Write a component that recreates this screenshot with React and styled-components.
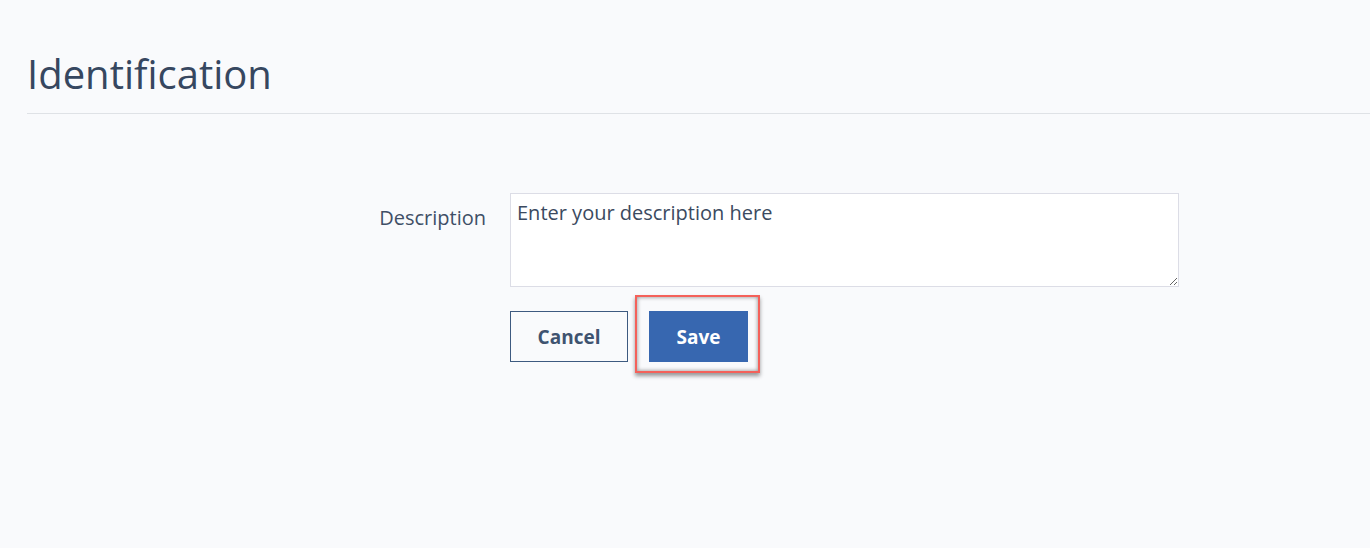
import React from "react";
import styled, { createGlobalStyle } from "styled-components";

const Global = createGlobalStyle`
  html, body { margin: 0; padding: 0; background: #f9fafc; }
  body { font-family: "Open Sans", "Noto Sans", sans-serif; color: #3b4a60; }
`;

const Page = styled.div`
  width: 1370px;
  height: 548px;
  background: #f9fafc;
  overflow: hidden;
`;

const Header = styled.header`
  margin-left: 27px;
  padding-top: 48px;
  padding-bottom: 13px;
  border-bottom: 1px solid #dfe2e6;
`;

const Title = styled.h1`
  margin: 0;
  font-size: 40px;
  line-height: 52px;
  font-weight: 400;
  color: #364760;
`;

const Form = styled.div`
  display: grid;
  grid-template-columns: 200px 669px;
  column-gap: 24px;
  row-gap: 24px;
  padding-left: 286px;
  padding-top: 79px;
`;

const Label = styled.label`
  text-align: right;
  font-size: 20px;
  line-height: 26px;
  padding-top: 12px;
  color: #3f4f66;
`;

const TextArea = styled.textarea`
  box-sizing: border-box;
  width: 669px;
  height: 94px;
  border: 1px solid #dcdde6;
  background: #fff;
  padding: 6px 6px;
  font-family: "Open Sans", "Noto Sans", sans-serif;
  font-size: 20px;
  line-height: 26px;
  color: #3b4a60;
  resize: vertical;
  outline: none;
  &::placeholder { color: #3b4a60; opacity: 1; }
`;

const Actions = styled.div`
  grid-column: 2;
  display: flex;
  gap: 21px;
`;

const Button = styled.button`
  box-sizing: border-box;
  height: 51px;
  padding: 0;
  width: ${(p) => (p.$primary ? "99px" : "118px")};
  font-family: "Open Sans", "Noto Sans", sans-serif;
  font-size: 19px;
  font-weight: 700;
  border: 1px solid ${(p) => (p.$primary ? "#3767b0" : "#3d5a80")};
  background: ${(p) => (p.$primary ? "#3767b0" : "transparent")};
  color: ${(p) => (p.$primary ? "#ffffff" : "#3f5370")};
  cursor: pointer;
`;

const Highlighted = styled.div`
  position: relative;
  display: flex;
`;

const HighlightBox = styled.span`
  position: absolute;
  left: -14px;
  top: -16px;
  right: -12px;
  bottom: -11px;
  border: 2px solid #f4615a;
  box-shadow: 0 3px 4px rgba(0, 0, 0, 0.4), inset 0 0 4px rgba(0, 0, 0, 0.45);
  pointer-events: none;
`;

export default function App() {
  return (
    <Page>
      <Global />
      <Header>
        <Title>Identification</Title>
      </Header>
      <Form>
        <Label htmlFor="desc">Description</Label>
        <TextArea id="desc" placeholder="Enter your description here" />
        <Actions>
          <Button>Cancel</Button>
          <Highlighted>
            <Button $primary>Save</Button>
            <HighlightBox />
          </Highlighted>
        </Actions>
      </Form>
    </Page>
  );
}
